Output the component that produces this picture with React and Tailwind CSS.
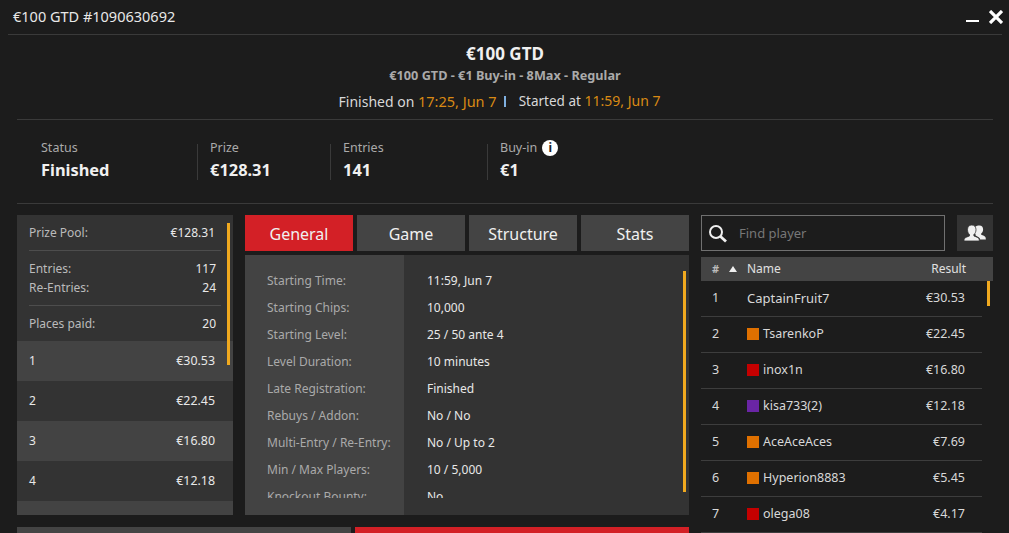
import React from 'react';

const prizes = [
  ['1', '€30.53'],
  ['2', '€22.45'],
  ['3', '€16.80'],
  ['4', '€12.18'],
];

const general = [
  ['Starting Time:', '11:59, Jun 7'],
  ['Starting Chips:', '10,000'],
  ['Starting Level:', '25 / 50 ante 4'],
  ['Level Duration:', '10 minutes'],
  ['Late Registration:', 'Finished'],
  ['Rebuys / Addon:', 'No / No'],
  ['Multi-Entry / Re-Entry:', 'No / Up to 2'],
  ['Min / Max Players:', '10 / 5,000'],
  ['Knockout Bounty:', 'No'],
];

const players = [
  ['1', null, 'CaptainFruit7', '€30.53'],
  ['2', 'bg-[#df7000]', 'TsarenkoP', '€22.45'],
  ['3', 'bg-[#c40000]', 'inox1n', '€16.80'],
  ['4', 'bg-[#6a25a5]', 'kisa733(2)', '€12.18'],
  ['5', 'bg-[#df7000]', 'AceAceAces', '€7.69'],
  ['6', 'bg-[#df7000]', 'Hyperion8883', '€5.45'],
  ['7', 'bg-[#c40000]', 'olega08', '€4.17'],
];

const Stat = ({ label, value, className, children }) => (
  <div className={className}>
    <div className="flex items-center h-[18px] text-[12.5px] text-[#aaaaaa] leading-[18px]">
      {label}
      {children}
    </div>
    <div className="mt-[2px] h-[22px] text-[16.4px] font-bold text-[#f0f0f0] leading-[22px]">{value}</div>
  </div>
);

const Tab = ({ label, active }) => (
  <div className={`w-[108px] h-[36px] pt-[2px] flex items-center justify-center text-[16px] text-[#f0f0f0] ${active ? 'bg-[#d32026]' : 'bg-[#444444]'}`}>
    {label}
  </div>
);

const LeftPanel = () => (
  <div className="relative w-[216px] h-[300px] bg-[#333333] overflow-hidden text-[12px] text-[#e8e8e8]">
    <div className="mx-[12px] h-[36px] flex items-center justify-between border-b border-[#4d4d4d] pr-[6px]">
      <span className="text-[#bbbbbb]">Prize Pool:</span>
      <span>€128.31</span>
    </div>
    <div className="mx-[12px] h-[55px] pt-[8px] border-b border-[#4d4d4d] pr-[5px] leading-[19px]">
      <div className="flex justify-between">
        <span className="text-[#bbbbbb]">Entries:</span>
        <span>117</span>
      </div>
      <div className="flex justify-between">
        <span className="text-[#bbbbbb]">Re-Entries:</span>
        <span>24</span>
      </div>
    </div>
    <div className="mx-[12px] h-[35px] flex items-center justify-between pr-[5px]">
      <span className="text-[#bbbbbb]">Places paid:</span>
      <span>20</span>
    </div>
    {prizes.map(([place, amount], i) => (
      <div key={place} className={`h-[40px] px-[12px] pr-[18px] flex items-center justify-between ${i % 2 === 0 ? 'bg-[#434343]' : 'bg-[#333333]'}`}>
        <span>{place}</span>
        <span className="text-[12.4px]">{amount}</span>
      </div>
    ))}
    <div className="h-[14px] bg-[#434343]" />
    <div className="absolute left-[210px] top-[8px] w-[3px] h-[142px] bg-[#f0a91f]" />
  </div>
);

const GeneralTab = () => (
  <div className="relative w-[444px] h-[260px] mt-[4px] flex bg-[#333333] overflow-hidden text-[12px]">
    <div className="w-[159px] bg-[#434343] pl-[22px] pt-[12px]">
      <div className="h-[231px] overflow-hidden">
        {general.map(([label]) => (
          <div key={label} className="h-[27px] leading-[27px] text-[#aaaaaa] whitespace-nowrap">{label}</div>
        ))}
      </div>
    </div>
    <div className="flex-1 pl-[23px] pt-[12px]">
      <div className="h-[231px] overflow-hidden">
        {general.map(([label, value]) => (
          <div key={label} className="h-[27px] leading-[27px] text-[#e8e8e8]">{value}</div>
        ))}
      </div>
    </div>
    <div className="absolute left-[438px] top-[16px] w-[3px] h-[221px] bg-[#f0a91f]" />
  </div>
);

const PlayerPanel = () => (
  <div className="w-[292px] text-[12.5px] text-[#d8d8d8]">
    <div className="flex justify-between h-[36px]">
      <div className="w-[244px] h-[36px] flex items-center border border-[#707070] bg-[#1c1c1c]">
        <svg width="20" height="20" viewBox="0 0 20 20" className="ml-[6px] mt-[1px]" fill="none" stroke="#f0f0f0">
          <circle cx="8" cy="8" r="6" strokeWidth="2" />
          <path d="M12.5 12.5L18 17.5" strokeWidth="2.8" />
        </svg>
        <span className="ml-[11px] pt-[2px] text-[13px] text-[#777777]">Find player</span>
      </div>
      <div className="w-[36px] h-[36px] bg-[#333333] flex items-center justify-center">
        <svg width="22" height="18" viewBox="0 0 22 18" fill="#f0f0f0">
          <path d="M15.5 1.5c2.3 0 3.6 1.7 3.6 3.9 0 1.7-.8 3.3-1.9 4.1v1.2c1.8.8 3.8 1.3 4.3 2.5.2.6.3 1.6.3 2.3h-5.6c-.3-1.7-2-2.6-4.6-3.9v-1.2c-1-1-1.6-2.6-1.6-4.4 0-2.5 1.7-4.5 5.6-4.5z" />
          <path d="M7.8 1c2.7 0 4.2 2 4.2 4.7 0 2-.8 3.8-2.1 4.8v1.4c2 .9 4.8 1.7 5.2 3 .2.6.2 1.4.2 2.1H0c0-.7 0-1.5.2-2.1.5-1.3 3.3-2.1 5.3-3v-1.4C4.3 9.5 3.5 7.7 3.5 5.7 3.5 3 5 1 7.8 1z" stroke="#333333" strokeWidth="0.8" />
        </svg>
      </div>
    </div>
    <div className="mt-[6px] h-[24px] bg-[#444444] flex items-center text-[12px] text-[#e0e0e0]">
      <span className="ml-[11px] w-[17px] font-bold text-[11px] text-[#bbbbbb]">#</span>
      <svg width="8" height="6" viewBox="0 0 8 6" fill="#f0f0f0"><path d="M4 0L8 6H0Z" /></svg>
      <span className="ml-[10px]">Name</span>
      <span className="ml-auto mr-[27px]">Result</span>
    </div>
    <div className="relative">
      {players.map(([rank, flag, name, result]) => (
        <div key={rank} className="w-[281px] h-[36px] flex items-center border-b border-[#3d3d3d]">
          <span className="ml-[11px] w-[35px]">{rank}</span>
          {flag && <span className={`w-[12px] h-[12px] mr-[4px] mb-[1px] ${flag}`} />}
          <span className={flag ? '' : 'text-[13px]'}>{name}</span>
          <span className="ml-auto mr-[17px]">{result}</span>
        </div>
      ))}
      <div className="absolute left-[286px] top-0 w-[3px] h-[25px] bg-[#f0a91f]" />
    </div>
  </div>
);

const App = () => {
  return (
    <div className="w-[1009px] h-[533px] overflow-hidden bg-[#1c1c1c] text-[#e8e8e8] font-['Noto_Sans','Open_Sans',sans-serif]">
      <div className="mx-[8px] w-[994px] h-[35px] flex items-center justify-between border-b border-[#3a3a3a] pl-[5px]">
        <span className="text-[14.5px] text-[#e8e8e8]">€100 GTD #1090630692</span>
        <div className="flex items-center gap-[10px] mr-[-1px]">
          <div className="w-[13px] h-[2px] bg-white mt-[8px]" />
          <svg width="14" height="14" viewBox="0 0 14 14" stroke="white" strokeWidth="3.2"><path d="M1 1L13 13M13 1L1 13" /></svg>
        </div>
      </div>

      <div className="h-[85px] mx-[17px] w-[976px] border-b border-[#3a3a3a] flex flex-col items-center">
        <div className="mt-[8px] h-[22px] leading-[22px] text-[17px] font-bold text-[#f0f0f0]">€100 GTD</div>
        <div className="mt-[2px] h-[17px] leading-[17px] text-[12.7px] font-bold text-[#aaaaaa]">€100 GTD - €1 Buy-in - 8Max - Regular</div>
        <div className="mt-[7px] pr-[11px] h-[20px] leading-[20px] text-[14px] flex items-center text-[#d8d8d8]">
          <span>Finished on <span className="text-[14.5px] text-[#d98a14]">17:25, Jun 7</span></span>
          <span className="ml-[7px] mr-[13px] w-[2px] h-[11px] bg-[#7fb0e0]" />
          <span><span className="text-[13.5px]">Started at</span> <span className="text-[#d98a14]">11:59, Jun 7</span></span>
        </div>
      </div>

      <div className="mx-[17px] w-[976px] h-[84px] border-b border-[#3a3a3a] flex pt-[19px]">
        <Stat label="Status" value="Finished" className="w-[180px] pl-[24px]" />
        <div className="w-px h-[36px] mt-[5px] bg-[#3a3a3a]" />
        <Stat label="Prize" value="€128.31" className="w-[132px] pl-[12px]" />
        <div className="w-px h-[36px] mt-[5px] bg-[#3a3a3a]" />
        <Stat label="Entries" value="141" className="w-[156px] pl-[12px]" />
        <div className="w-px h-[36px] mt-[5px] bg-[#3a3a3a]" />
        <Stat label="Buy-in" value="€1" className="pl-[12px]">
          <span className="ml-[5px] w-[16px] h-[16px] rounded-full bg-white flex items-center justify-center text-[#1c1c1c] text-[12px] font-bold leading-none">i</span>
        </Stat>
      </div>

      <div className="mt-[11px] ml-[17px] flex">
        <LeftPanel />
        <div className="ml-[12px] w-[444px]">
          <div className="flex gap-[4px]">
            <Tab label="General" active />
            <Tab label="Game" />
            <Tab label="Structure" />
            <Tab label="Stats" />
          </div>
          <GeneralTab />
          <div className="mt-[12px] flex gap-[4px]">
            <div className="w-[334px] h-[36px] -ml-[228px] bg-[#444444] shrink-0" />
            <div className="w-[334px] h-[36px] bg-[#d32026] shrink-0" />
          </div>
        </div>
        <div className="ml-[12px]">
          <PlayerPanel />
        </div>
      </div>
    </div>
  );
};

export default App;
